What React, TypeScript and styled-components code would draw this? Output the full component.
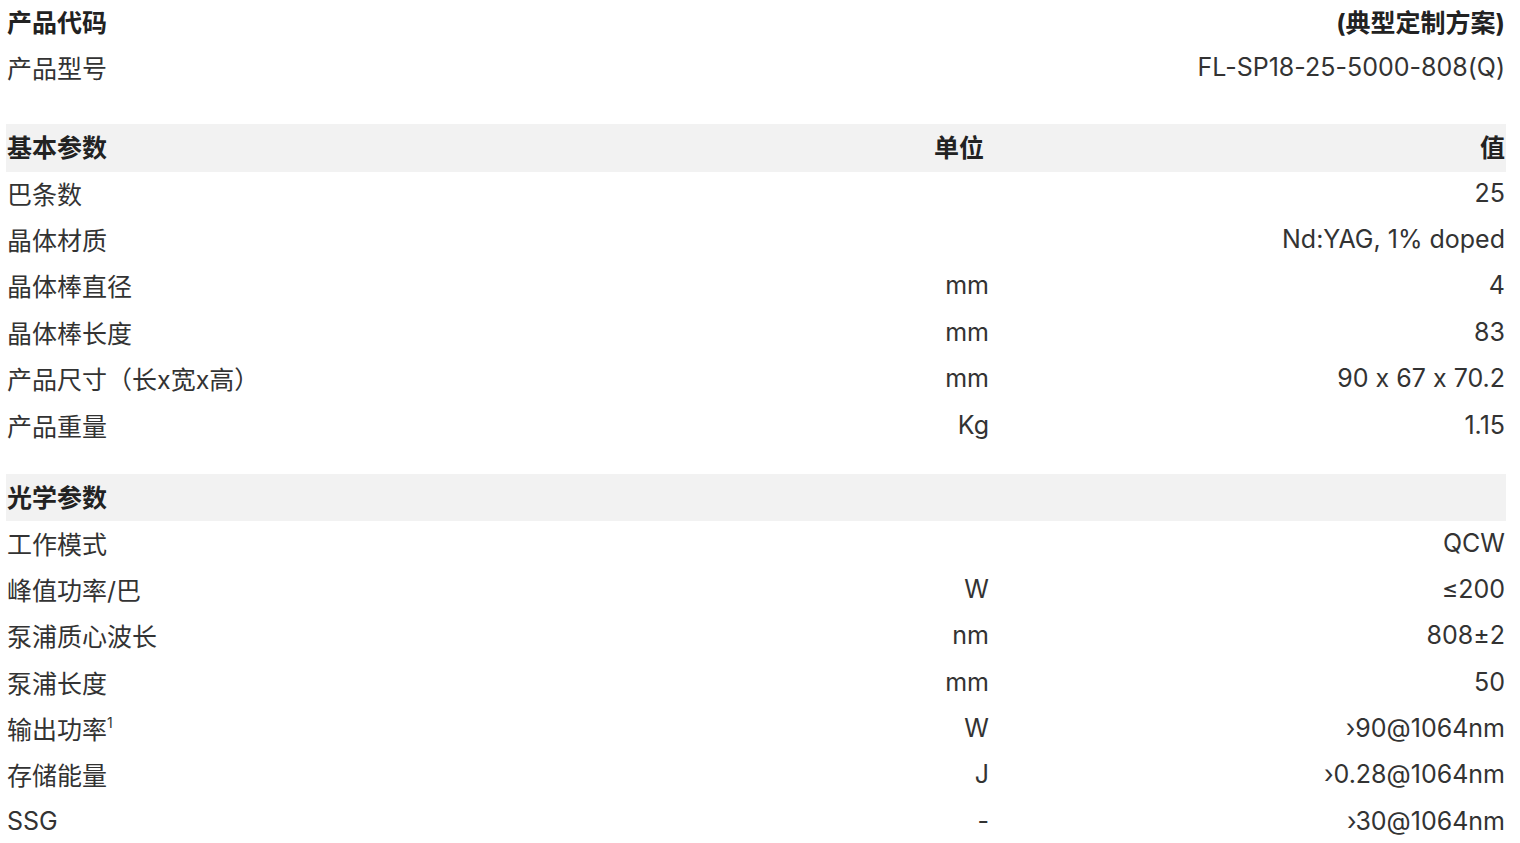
import React from "react";
import styled, { createGlobalStyle } from "styled-components";

const Global = createGlobalStyle`
  html, body { margin: 0; padding: 0; background: #ffffff; }
  body {
    font-family: "Inter", "Noto Sans CJK SC", sans-serif;
    color: #333333;
    font-feature-settings: "calt" 0;
  }
`;

const Page = styled.div`
  width: 1500px;
  padding: 0 0 0 6px;
`;

const Section = styled.div<{ $gap?: number }>`
  display: flex;
  flex-direction: column;
  margin-top: ${(p) => p.$gap ?? 0}px;
`;

const Row = styled.div<{ $head?: boolean }>`
  display: grid;
  grid-template-columns: 782px 200px 1fr;
  align-items: center;
  box-sizing: border-box;
  height: ${(p) => (p.$head ? 47.5 : 46.4)}px;
  padding: 0 1px 4px;
  background: ${(p) => (p.$head ? "#f2f2f2" : "transparent")};
  font-size: 25px;
  font-weight: ${(p) => (p.$head ? 700 : 400)};
  color: ${(p) => (p.$head ? "#222222" : "#333333")};
`;

const TitleRow = styled.div<{ $bold?: boolean }>`
  display: flex;
  justify-content: space-between;
  align-items: center;
  box-sizing: border-box;
  height: 46px;
  padding: 0 1px 5px;
  font-size: 25px;
  font-weight: ${(p) => (p.$bold ? 700 : 400)};
  color: ${(p) => (p.$bold ? "#222222" : "#333333")};
`;

const Name = styled.span`
  white-space: nowrap;
`;

const Unit = styled.span<{ $head?: boolean }>`
  text-align: right;
  white-space: nowrap;
  padding-right: ${(p) => (p.$head ? 5 : 0)}px;
`;

const Value = styled.span`
  text-align: right;
  white-space: nowrap;
`;

const Sup = styled.sup`
  font-size: 14px;
  vertical-align: 11px;
  line-height: 0;
`;

type Item = [React.ReactNode, string, string];

const basic: Item[] = [
  ["巴条数", "", "25"],
  ["晶体材质", "", "Nd:YAG, 1% doped"],
  ["晶体棒直径", "mm", "4"],
  ["晶体棒长度", "mm", "83"],
  ["产品尺寸（长x宽x高）", "mm", "90 x 67 x 70.2"],
  ["产品重量", "Kg", "1.15"],
];

const optical: Item[] = [
  ["工作模式", "", "QCW"],
  ["峰值功率/巴", "W", "≤200"],
  ["泵浦质心波长", "nm", "808±2"],
  ["泵浦长度", "mm", "50"],
  [
    <>
      输出功率<Sup>1</Sup>
    </>,
    "W",
    "›90@1064nm",
  ],
  ["存储能量", "J", "›0.28@1064nm"],
  ["SSG", "-", "›30@1064nm"],
];

export default function App() {
  return (
    <Page>
      <Global />
      <Section>
        <TitleRow $bold>
          <Name>产品代码</Name>
          <Value>(典型定制方案)</Value>
        </TitleRow>
        <TitleRow>
          <Name>产品型号</Name>
          <Value>FL-SP18-25-5000-808(Q)</Value>
        </TitleRow>
      </Section>
      <Section $gap={32}>
        <Row $head>
          <Name>基本参数</Name>
          <Unit $head>单位</Unit>
          <Value>值</Value>
        </Row>
        {basic.map((r, i) => (
          <Row key={i}>
            <Name>{r[0]}</Name>
            <Unit>{r[1]}</Unit>
            <Value>{r[2]}</Value>
          </Row>
        ))}
      </Section>
      <Section $gap={24}>
        <Row $head>
          <Name>光学参数</Name>
          <Unit></Unit>
          <Value></Value>
        </Row>
        {optical.map((r, i) => (
          <Row key={i}>
            <Name>{r[0]}</Name>
            <Unit>{r[1]}</Unit>
            <Value>{r[2]}</Value>
          </Row>
        ))}
      </Section>
    </Page>
  );
}
